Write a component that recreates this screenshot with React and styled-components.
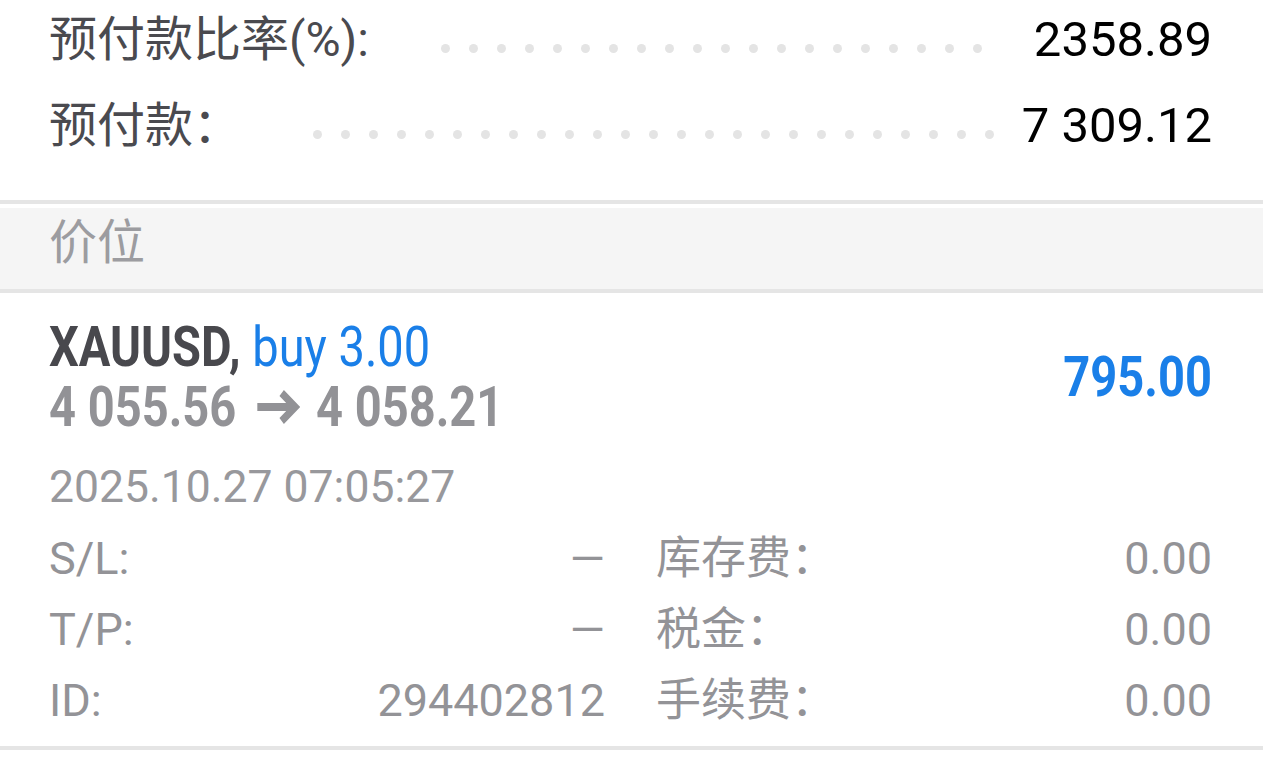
import React from "react";
import styled, { createGlobalStyle } from "styled-components";

const GlobalStyle = createGlobalStyle`
  html, body {
    margin: 0;
    padding: 0;
    background: #ffffff;
  }
  body {
    font-family: Roboto, "Noto Sans CJK SC", sans-serif;
    -webkit-font-smoothing: antialiased;
  }
  * { box-sizing: border-box; }
`;

const Page = styled.div`
  width: 100%;
  min-height: 757px;
  background: #ffffff;
  overflow: hidden;
`;

/* ---------- account summary ---------- */
const Summary = styled.section`
  display: flex;
  flex-direction: column;
  gap: 6px;
  padding: 0 51px 34px 49px;
`;

const SummaryRow = styled.div`
  display: flex;
  align-items: center;
  height: 80px;
  font-size: 48px;
  line-height: 80px;
`;

const SummaryLabel = styled.span`
  color: #4a4a4f;
  white-space: nowrap;
`;

const Leader = styled.span`
  flex: 1;
  display: flex;
  flex-wrap: wrap;
  gap: 0 19px;
  height: 9px;
  overflow: hidden;
  margin: 16px 24px 0 72px;
`;

const Dot = styled.i`
  flex: none;
  width: 9px;
  height: 9px;
  border-radius: 50%;
  background: #e4e4e4;
`;

const SummaryValue = styled.span`
  color: #000000;
  font-size: 49px;
  white-space: nowrap;
`;

/* ---------- section header ---------- */
const SectionHeader = styled.div`
  border-top: 4px solid #e5e5e5;
  border-bottom: 4px solid #e5e5e5;
  padding-top: 4px;
  background: #ffffff;
`;

const HeaderBand = styled.div`
  display: flex;
  align-items: center;
  height: 81px;
  padding: 0 49px 12px;
  background: #f5f5f5;
  color: #9c9ca0;
  font-size: 48px;
  line-height: 60px;
`;

/* ---------- trade ---------- */
const Trade = styled.article`
  padding: 24px 51px 10px 49px;
  border-bottom: 4px solid #e5e5e5;
`;

const TradeHead = styled.div`
  display: flex;
  align-items: center;
  justify-content: space-between;
`;

const TradeLines = styled.div`
  display: flex;
  flex-direction: column;
`;

const Line = styled.div`
  height: 60px;
  font-size: 56px;
  line-height: 60px;
  white-space: nowrap;
`;

const Condensed = styled.span`
  display: inline-block;
  white-space: nowrap;
  transform: scaleX(0.84);
  transform-origin: ${(p) => (p.$right ? "right" : "left")} center;
`;

const Symbol = styled.span`
  color: #48484d;
  font-weight: 700;
`;

const Side = styled.span`
  color: #1a7fe8;
  font-weight: 400;
`;

const Prices = styled.span`
  color: #929296;
  font-weight: 700;
`;

const ArrowSvg = styled.svg`
  width: 52px;
  height: 34px;
  margin: 0 19px 0 24px;
  vertical-align: 2px;
  color: #929296;
`;

const Profit = styled.div`
  font-size: 56px;
  line-height: 60px;
  font-weight: 700;
  color: #1a7fe8;
  white-space: nowrap;
`;

const DateLine = styled.div`
  margin-top: 20px;
  height: 60px;
  font-size: 44.5px;
  line-height: 60px;
  color: #98989c;
  white-space: nowrap;
`;

const Details = styled.div`
  margin-top: 6px;
  display: grid;
  grid-template-columns: 1fr 1fr;
  grid-auto-rows: 71px;
  column-gap: 51px;
  font-size: 45px;
  color: #939397;
`;

const Cell = styled.div`
  display: flex;
  align-items: center;
  justify-content: space-between;
  white-space: nowrap;
  line-height: 71px;
`;

const Arrow = () => (
  <ArrowSvg viewBox="0 0 52 34" aria-hidden="true">
    <path
      d="M1 17 H45 M30 3 L46 17 L30 31"
      fill="none"
      stroke="currentColor"
      strokeWidth="8"
      strokeLinejoin="miter"
    />
  </ArrowSvg>
);

const summary = [
  { label: "预付款比率(%):", value: "2358.89" },
  { label: "预付款：", value: "7 309.12" },
];

const details = [
  ["S/L:", "—", "库存费：", "0.00"],
  ["T/P:", "—", "税金：", "0.00"],
  ["ID:", "294402812", "手续费：", "0.00"],
];

const dots = Array.from({ length: 40 }, (_, i) => i);

export default function App() {
  return (
    <Page>
      <GlobalStyle />
      <Summary>
        {summary.map((row) => (
          <SummaryRow key={row.label}>
            <SummaryLabel>{row.label}</SummaryLabel>
            <Leader>
              {dots.map((d) => (
                <Dot key={d} />
              ))}
            </Leader>
            <SummaryValue>{row.value}</SummaryValue>
          </SummaryRow>
        ))}
      </Summary>

      <SectionHeader>
        <HeaderBand>价位</HeaderBand>
      </SectionHeader>

      <Trade>
        <TradeHead>
          <TradeLines>
            <Line>
              <Condensed>
                <Symbol>XAUUSD,</Symbol> <Side>buy 3.00</Side>
              </Condensed>
            </Line>
            <Line>
              <Condensed>
                <Prices>
                  4 055.56
                  <Arrow />
                  4 058.21
                </Prices>
              </Condensed>
            </Line>
          </TradeLines>
          <Profit>
            <Condensed $right>795.00</Condensed>
          </Profit>
        </TradeHead>
        <DateLine>2025.10.27 07:05:27</DateLine>
        <Details>
          {details.map(([l1, v1, l2, v2]) => (
            <React.Fragment key={l1}>
              <Cell>
                <span>{l1}</span>
                <span>{v1}</span>
              </Cell>
              <Cell>
                <span>{l2}</span>
                <span>{v2}</span>
              </Cell>
            </React.Fragment>
          ))}
        </Details>
      </Trade>
    </Page>
  );
}
